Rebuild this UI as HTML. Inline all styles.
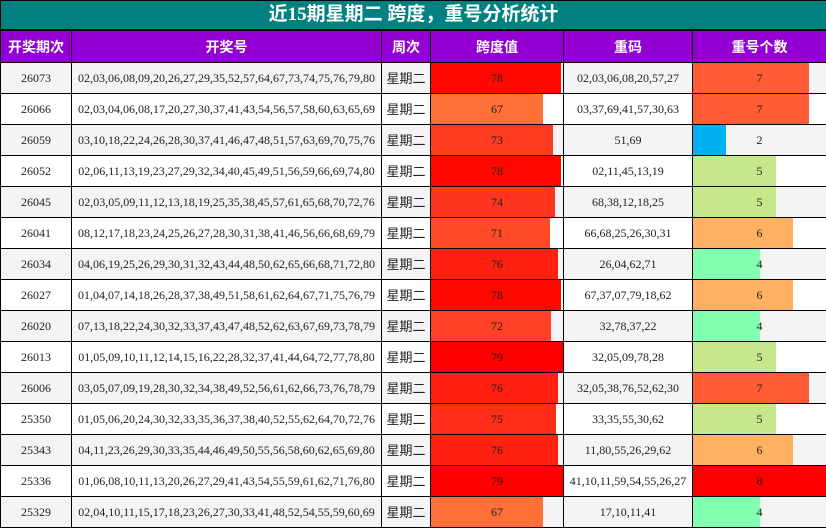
<!DOCTYPE html><html><head><meta charset="utf-8"><style>
body{margin:0;width:826px;height:530px;overflow:hidden;background:#fff;font-family:"Liberation Serif","Noto Serif CJK SC",serif}
table{border-collapse:collapse;position:absolute;left:0;top:0;width:826px;table-layout:fixed}
td{border:1px solid #000;padding:0;text-align:center;font-size:12px;line-height:14px;color:#222;height:30px;position:relative}
.t td{background:#008080;color:#fff;font-size:19px;line-height:22px;font-weight:bold;height:28px;border:1px solid #000;border-bottom:2px solid #000;font-family:"Liberation Serif","Noto Sans CJK SC",sans-serif}
.h td{background:#9400d3;color:#fff;font-size:14px;line-height:16px;font-weight:bold;height:31px;font-family:"Noto Sans CJK SC",sans-serif}
tr.g td{background:#f4f4f4}
.wk{font-family:"Noto Sans CJK SC",sans-serif;font-size:13px;line-height:14px}
.b{position:absolute;left:0;top:0;bottom:0}
.v{position:relative}
</style></head><body><table>
<colgroup><col style="width:71px"><col style="width:310px"><col style="width:49px"><col style="width:133px"><col style="width:129px"><col style="width:134px"></colgroup>
<tr class="t"><td colspan="6">近15期星期二 跨度，重号分析统计</td></tr>
<tr class="h"><td>开奖期次</td><td>开奖号</td><td>周次</td><td>跨度值</td><td>重码</td><td>重号个数</td></tr>
<tbody id="b"></tbody></table>
<script>
var d=[["26073","02,03,06,08,09,20,26,27,29,35,52,57,64,67,73,74,75,76,79,80",78,"02,03,06,08,20,57,27",7],
["26066","02,03,04,06,08,17,20,27,30,37,41,43,54,56,57,58,60,63,65,69",67,"03,37,69,41,57,30,63",7],
["26059","03,10,18,22,24,26,28,30,37,41,46,47,48,51,57,63,69,70,75,76",73,"51,69",2],
["26052","02,06,11,13,19,23,27,29,32,34,40,45,49,51,56,59,66,69,74,80",78,"02,11,45,13,19",5],
["26045","02,03,05,09,11,12,13,18,19,25,35,38,45,57,61,65,68,70,72,76",74,"68,38,12,18,25",5],
["26041","08,12,17,18,23,24,25,26,27,28,30,31,38,41,46,56,66,68,69,79",71,"66,68,25,26,30,31",6],
["26034","04,06,19,25,26,29,30,31,32,43,44,48,50,62,65,66,68,71,72,80",76,"26,04,62,71",4],
["26027","01,04,07,14,18,26,28,37,38,49,51,58,61,62,64,67,71,75,76,79",78,"67,37,07,79,18,62",6],
["26020","07,13,18,22,24,30,32,33,37,43,47,48,52,62,63,67,69,73,78,79",72,"32,78,37,22",4],
["26013","01,05,09,10,11,12,14,15,16,22,28,32,37,41,44,64,72,77,78,80",79,"32,05,09,78,28",5],
["26006","03,05,07,09,19,28,30,32,34,38,49,52,56,61,62,66,73,76,78,79",76,"32,05,38,76,52,62,30",7],
["25350","01,05,06,20,24,30,32,33,35,36,37,38,40,52,55,62,64,70,72,76",75,"33,35,55,30,62",5],
["25343","04,11,23,26,29,30,33,35,44,46,49,50,55,56,58,60,62,65,69,80",76,"11,80,55,26,29,62",6],
["25336","01,06,08,10,11,13,20,26,27,29,41,43,54,55,59,61,62,71,76,80",79,"41,10,11,59,54,55,26,27",8],
["25329","02,04,10,11,15,17,18,23,26,27,30,33,41,48,52,54,55,59,60,69",67,"17,10,11,41",4]];
var sc={79:"#ff0000",78:"#ff0800",76:"#ff2010",75:"#ff2c18",74:"#ff3520",73:"#ff3b20",72:"#ff4024",71:"#ff4a28",67:"#ff7038"};
var cc={2:"#00b0f0",4:"#80ffb0",5:"#c5e88a",6:"#ffb060",7:"#ff5c33",8:"#ff0000"};
var h="";d.forEach(function(r,i){h+='<tr class="'+(i%2?'':'g')+'"><td>'+r[0]+'</td><td>'+r[1]+'</td><td class="wk">星期二</td><td><div class="b" style="width:'+(r[2]/79*100)+'%;background:'+sc[r[2]]+'"></div><span class="v">'+r[2]+'</span></td><td>'+r[3]+'</td><td><div class="b" style="width:'+(r[4]/8*100)+'%;background:'+cc[r[4]]+'"></div><span class="v">'+r[4]+'</span></td></tr>'});
document.getElementById("b").innerHTML=h;
</script></body></html>
